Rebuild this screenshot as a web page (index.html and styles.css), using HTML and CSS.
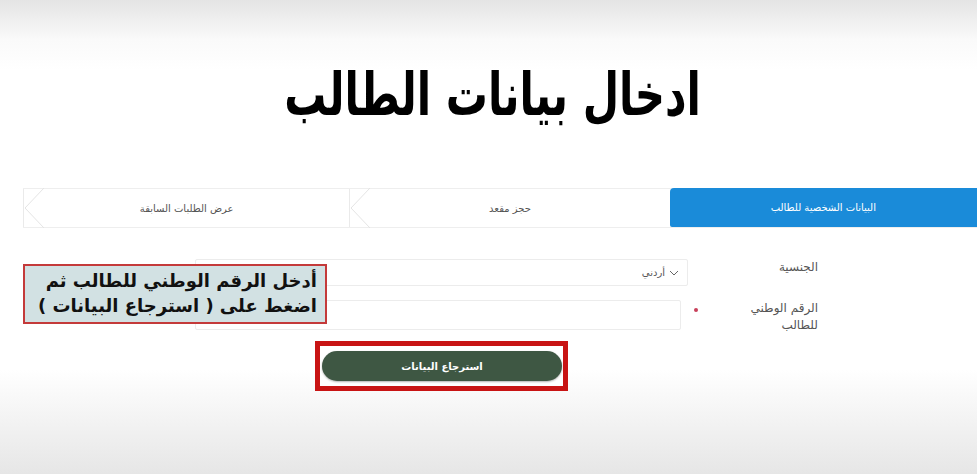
FILE: index.html
```html
<!DOCTYPE html>
<html lang="ar" dir="rtl">
<head>
    <meta charset="UTF-8">
    <meta name="viewport" content="width=device-width, initial-scale=1.0">
    <title>ادخال بيانات الطالب</title>
    <link rel="stylesheet" href="styles.css">
</head>
<body>
<div class="page">
    <h1 class="title"><span>ادخال بيانات الطالب</span></h1>

    <div class="tabs">
        <div class="tab active">البيانات الشخصية للطالب</div>
        <div class="tab">
            حجز مقعد
            <svg class="chevron" width="22" height="40" viewBox="0 0 22 40"><path d="M20 0 L1 20 L20 40" fill="none" stroke="#e4e4e4" stroke-width="1"/></svg>
        </div>
        <div class="tab">
            عرض الطلبات السابقة
            <svg class="chevron" width="22" height="40" viewBox="0 0 22 40"><path d="M20 0 L1 20 L20 40" fill="none" stroke="#e4e4e4" stroke-width="1"/></svg>
        </div>
    </div>

    <div class="form">
        <div class="row">
            <label class="label">الجنسية</label>
            <div class="select">
                <svg class="caret" width="10" height="6" viewBox="0 0 10 6"><path d="M1 1 L5 5 L9 1" fill="none" stroke="#666" stroke-width="1"/></svg>
                <span>أردني</span>
            </div>
        </div>
        <div class="row row-id">
            <label class="label">الرقم الوطني<br>للطالب</label>
            <span class="required"></span>
            <div class="input"></div>
        </div>
        <div class="actions">
            <div class="highlight">
                <button class="fetch">استرجاع البيانات</button>
            </div>
        </div>

        <div class="note">أدخل الرقم الوطني للطالب ثم<br>اضغط على ( استرجاع البيانات )</div>
    </div>
</div>
</body>
</html>
```

FILE: styles.css
```css
html, body {
    margin: 0;
    height: 100%;
}

body {
    font-family: "DejaVu Sans", sans-serif;
    background: linear-gradient(to bottom, #e4e4e4 0px, #fafafa 40px, #ffffff 70px, #ffffff 370px, #f3f3f3 420px, #e6e6e6 474px);
    overflow: hidden;
}

.page {
    width: 977px;
    height: 474px;
    box-sizing: border-box;
    padding-top: 62px;
}

.title {
    margin: 0 0 0 8px;
    text-align: center;
    font-family: "DejaVu Sans Condensed", "DejaVu Sans", sans-serif;
    font-size: 59px;
    font-weight: bold;
    line-height: 66px;
    color: #000;
}

.title span {
    display: inline-block;
    transform: scaleX(0.79);
}

.tabs {
    display: flex;
    margin: 60px 0 0 23px;
    height: 40px;
    border-top: 1px solid #eeeeee;
    border-bottom: 1px solid #eeeeee;
    box-sizing: border-box;
}

.tab {
    position: relative;
    display: flex;
    align-items: center;
    justify-content: center;
    width: 320px;
    font-size: 10px;
    color: #555;
    border-left: 1px solid #eaeaea;
    background: #fff;
}

.tab:last-child {
    width: 326px;
}

.tab.active {
    width: 308px;
    margin: -1px 0 0 0;
    height: 39px;
    background: #1a8bd9;
    color: #fff;
    border-left: none;
    border-top-left-radius: 4px;
    border-bottom-left-radius: 2px;
}

.chevron {
    position: absolute;
    left: 0;
    top: -1px;
}

.form {
    position: relative;
    margin-top: 31px;
    padding-right: 159px;
}

.row {
    display: flex;
    align-items: flex-start;
}

.label {
    width: 130px;
    font-size: 12px;
    line-height: 17px;
    color: #555;
}

.select {
    width: 493px;
    height: 27px;
    box-sizing: border-box;
    border: 1px solid #ececec;
    border-radius: 2px;
    display: flex;
    align-items: center;
    padding-right: 8px;
    font-size: 10px;
    color: #555;
    background: #fff;
}

.caret {
    margin-left: 4px;
}

.row-id {
    margin-top: 14px;
}

.row-id .label {
    width: 120px;
}

.required {
    width: 4px;
    height: 4px;
    border-radius: 50%;
    background: #c8405a;
    margin: 8px 0 0 0;
}

.input {
    width: 486px;
    height: 30px;
    margin-right: 13px;
    box-sizing: border-box;
    border: 1px solid #ececec;
    border-radius: 2px;
    background: #fff;
}

.actions {
    display: flex;
    justify-content: center;
    width: 493px;
    margin: 7px 130px 0 0;
}

.highlight {
    border: 5px solid #c81414;
    padding: 5px 1px 5px 2px;
    background: #fff;
}

.fetch {
    display: block;
    width: 240px;
    height: 30px;
    border: none;
    border-radius: 15px;
    background: #3e5743;
    color: #fff;
    font-family: "DejaVu Sans", sans-serif;
    font-size: 10px;
    font-weight: bold;
    box-shadow: 0 1px 2px rgba(0, 0, 0, 0.3);
}

.note {
    position: absolute;
    left: 23px;
    top: 5px;
    width: 304px;
    height: 60px;
    box-sizing: border-box;
    border: 2px solid #c43a3a;
    background: #d2e1e3;
    padding: 2px 8px 0 6px;
    font-size: 18px;
    font-weight: bold;
    line-height: 25px;
    color: #111;
    text-align: right;
}
```
